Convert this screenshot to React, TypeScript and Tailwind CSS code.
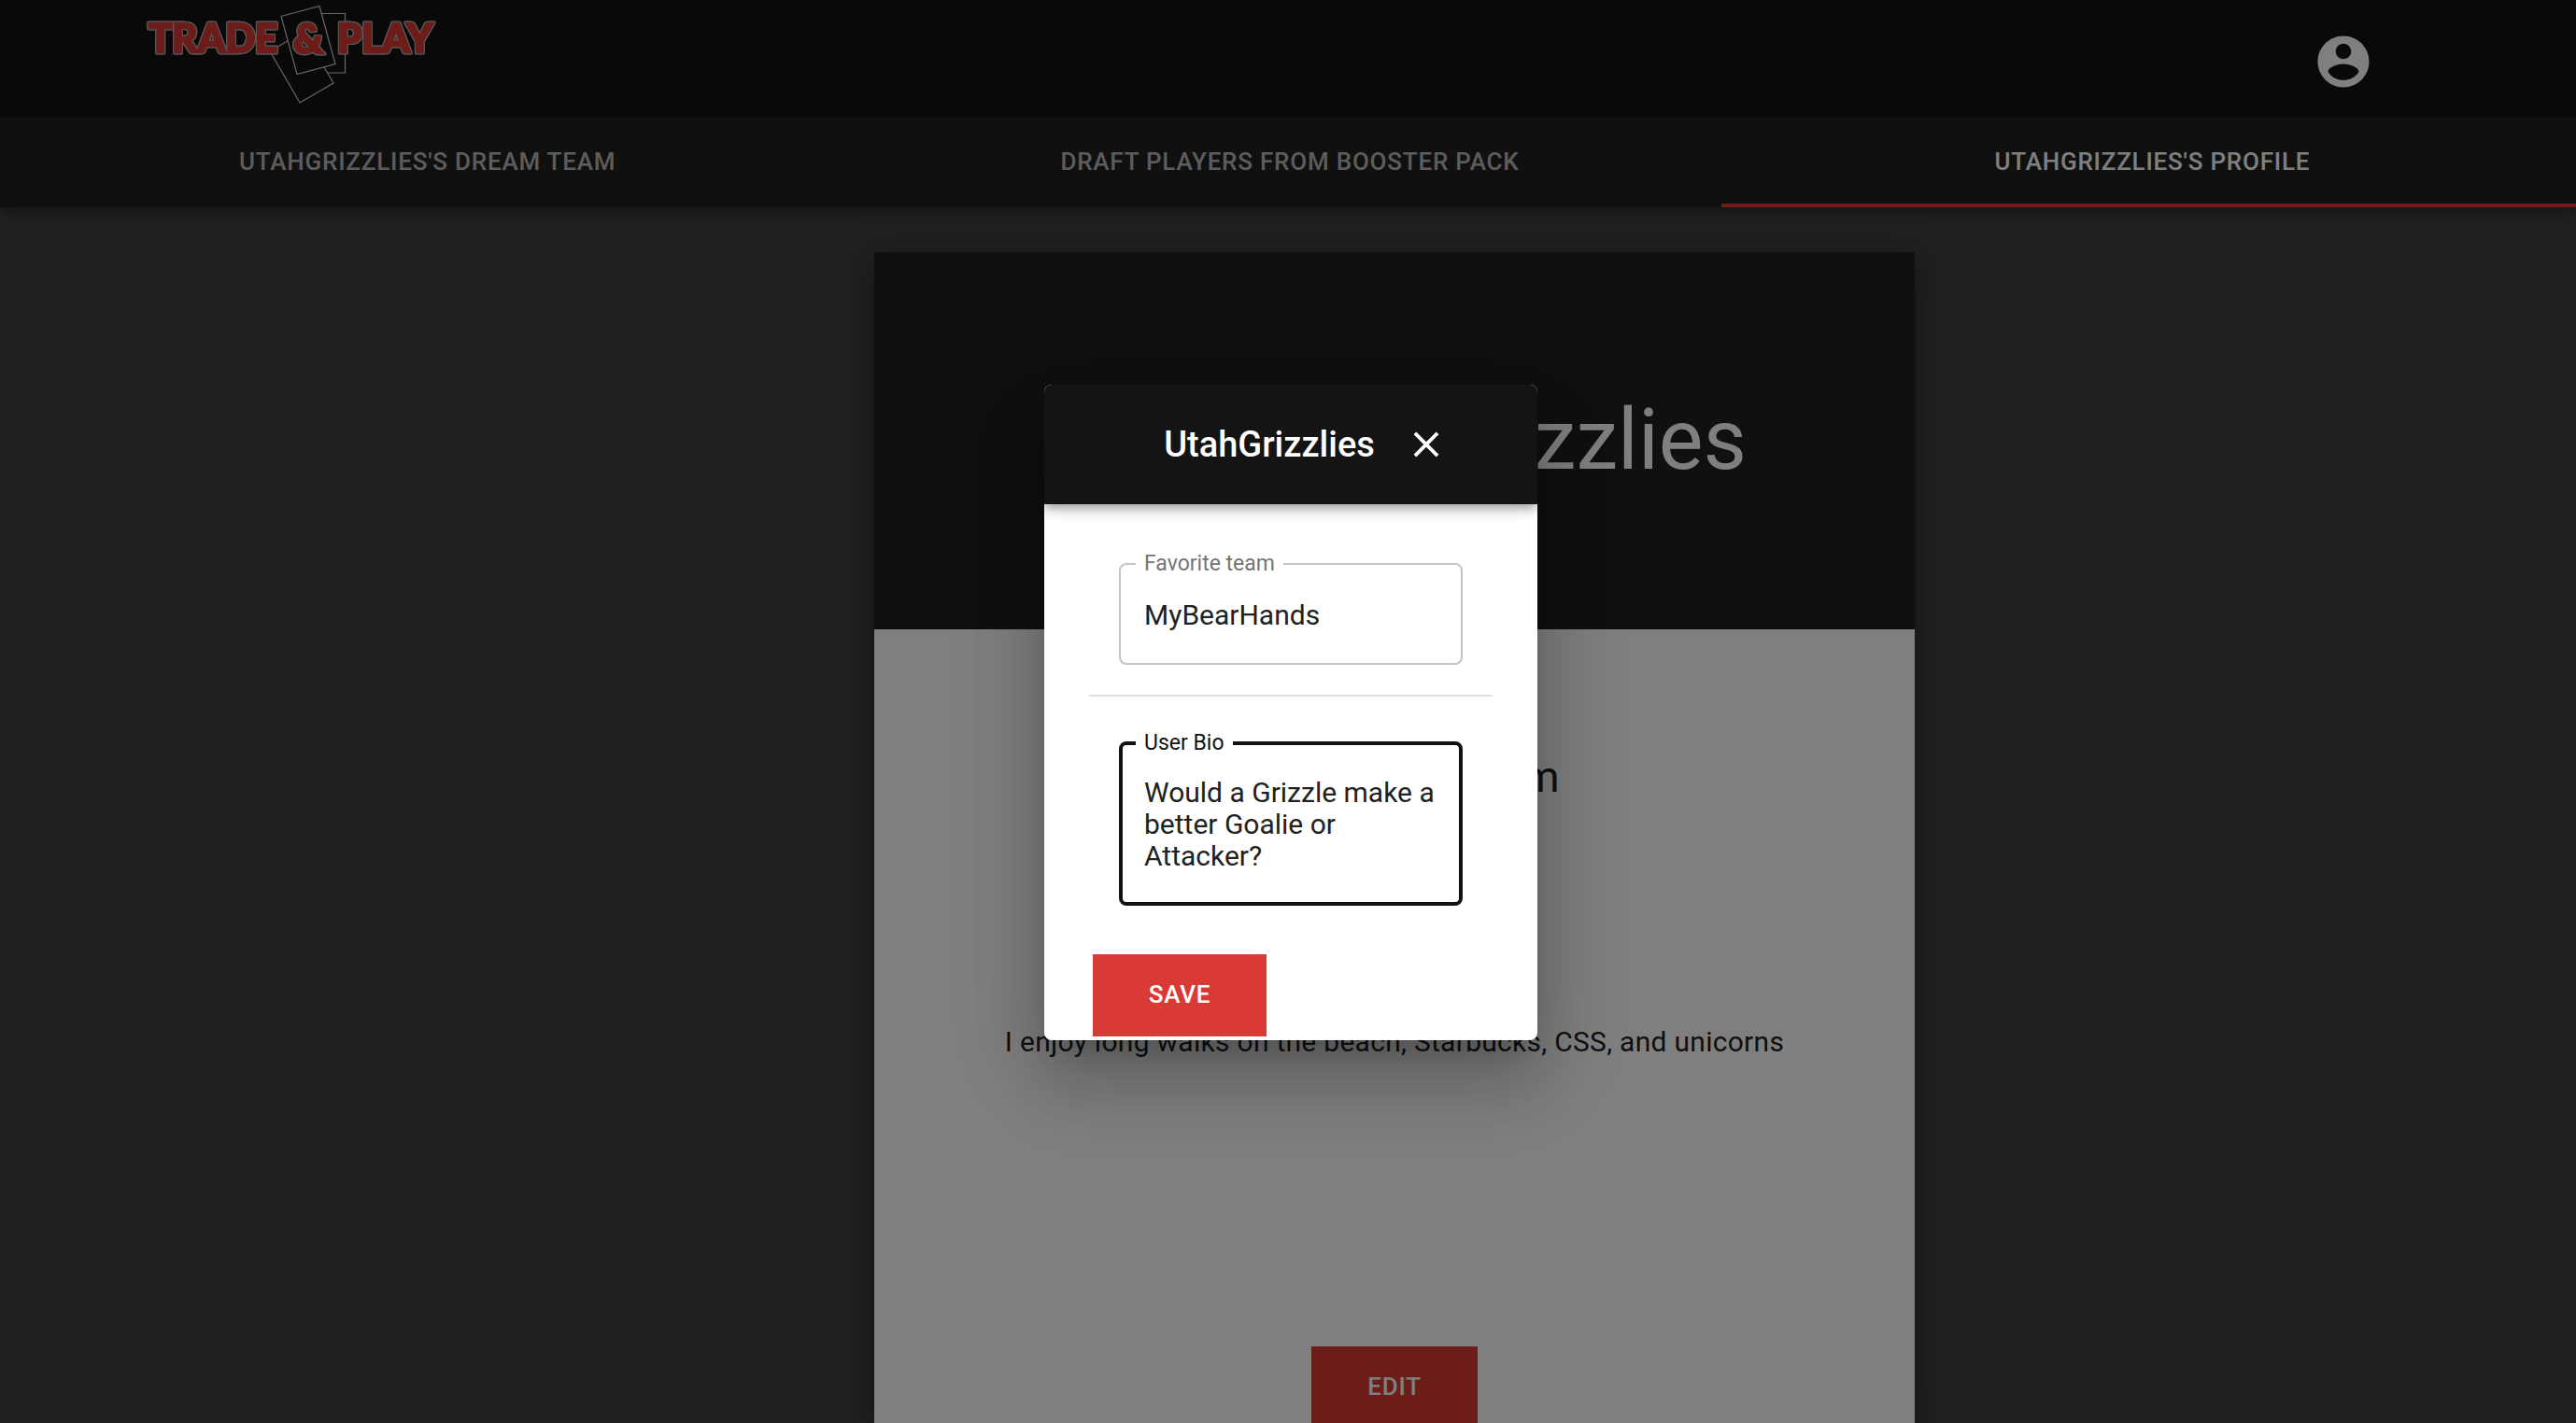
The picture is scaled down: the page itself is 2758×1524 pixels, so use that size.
import React from "react";

const tabs = [
  { label: "UtahGrizzlies's dream team", active: false },
  { label: "Draft players from booster pack", active: false },
  { label: "UtahGrizzlies's profile", active: true },
];

function Logo() {
  return (
    <svg
      width="320"
      height="112"
      viewBox="0 0 320 112"
      fill="none"
      role="img"
      aria-label="Trade & Play"
      className="block"
    >
      <g stroke="#d0d0d0" strokeWidth="1.2" fill="#121212">
        <path d="M180 14.500h38.500v63.500h-38.500z" />
        <path d="M138 55l36-21 32 55-36 21z" />
        <path d="M150 17.500l41-11 17 62-41 11z" />
      </g>
      <g
        fill="#d93a35"
        stroke="#d93a35"
        strokeWidth="2.5"
        strokeLinejoin="miter"
        fontFamily="Lato, sans-serif"
        fontWeight="900"
        fontSize="42"
        className="[filter:drop-shadow(1px_0_0_#b0b0b0)_drop-shadow(-1px_0_0_#b0b0b0)_drop-shadow(0_1px_0_#b0b0b0)_drop-shadow(0_-1px_0_#b0b0b0)]"
      >
        <text x="8" y="56">TRADE</text>
        <text x="163" y="57" fontSize="44">&amp;</text>
        <text x="210" y="56">PLAY</text>
      </g>
    </svg>
  );
}

function AccountIcon() {
  return (
    <svg width="66" height="66" viewBox="0 0 24 24" fill="#fff" aria-hidden="true">
      <path d="M12 2C6.480 2 2 6.480 2 12s4.480 10 10 10 10-4.480 10-10S17.520 2 12 2zm0 3c1.660 0 3 1.340 3 3s-1.340 3-3 3-3-1.340-3-3 1.340-3 3-3zm0 14.200c-2.500 0-4.710-1.280-6-3.220.030-1.990 4-3.080 6-3.080 1.990 0 5.970 1.090 6 3.080-1.290 1.940-3.500 3.220-6 3.220z" />
    </svg>
  );
}

function CloseIcon() {
  return (
    <svg width="46" height="46" viewBox="0 0 24 24" fill="currentColor" aria-hidden="true">
      <path d="M19 6.410L17.590 5 12 10.590 6.410 5 5 6.410 10.590 12 5 17.590 6.410 19 12 13.410 17.590 19 19 17.590 13.410 12z" />
    </svg>
  );
}

function Page() {
  return (
    <div className="flex min-h-screen flex-col bg-[#424242]">
      <header className="relative overflow-x-clip bg-[#202020] shadow-[0_4px_8px_-2px_rgba(0,0,0,0.2),0_8px_10px_rgba(0,0,0,0.14),0_2px_20px_rgba(0,0,0,0.12)]">
        <div className="flex h-[126px] items-start justify-between bg-[#121212] pr-[216px] pl-[151px]">
          <Logo />
          <button type="button" aria-label="Account" className="mt-[33px]">
            <AccountIcon />
          </button>
        </div>
        <nav className="-mr-2 -ml-1 grid grid-cols-3">
          {tabs.map((tab) => (
            <button
              key={tab.label}
              type="button"
              aria-current={tab.active ? "page" : undefined}
              className={
                tab.active
                  ? "h-24 border-b-4 border-[#d93a35] pt-0.5 text-[26px] font-medium tracking-[0.03em] text-white uppercase"
                  : "h-24 border-b-4 border-transparent pt-0.5 text-[26px] font-medium tracking-[0.03em] text-white/70 uppercase"
              }
            >
              {tab.label}
            </button>
          ))}
        </nav>
      </header>

      <main className="mt-12 mr-[708px] ml-[936px] flex flex-1 flex-col bg-white text-[#212121] shadow-[0_6px_6px_-4px_rgba(0,0,0,0.2),0_10px_28px_rgba(0,0,0,0.14),0_6px_40px_rgba(0,0,0,0.3)]">
        <div className="flex h-[404px] items-center justify-end bg-[#202020] pr-[180px]">
          <h1 className="text-[90px] leading-none text-white">UtahGrizzlies</h1>
        </div>
        <div className="flex flex-1 flex-col items-center pt-[126px]">
          <h2 className="text-[46px] leading-[64px]">My Favorite team</h2>
          <p className="mt-[228px] text-[30px] leading-[48px] tracking-[0.00938em]">
            I enjoy long walks on the beach, Starbucks, CSS, and unicorns
          </p>
          <button
            type="button"
            className="mt-[302px] h-[88px] w-[178px] bg-[#d93a35] pb-0.5 text-[26px] font-medium tracking-[0.03em] text-white uppercase"
          >
            Edit
          </button>
        </div>
      </main>
    </div>
  );
}

function ProfileDialog() {
  return (
    <div
      role="dialog"
      aria-modal="true"
      aria-labelledby="dialog-title"
      className="w-[528px] overflow-hidden rounded-lg bg-white text-[#212121] shadow-[0_22px_30px_-14px_rgba(0,0,0,0.2),0_48px_76px_6px_rgba(0,0,0,0.14),0_18px_92px_16px_rgba(0,0,0,0.12)]"
    >
      <div className="flex h-32 items-center justify-center gap-8 bg-[#141414] pl-8 text-white shadow-[0_4px_8px_-2px_rgba(0,0,0,0.2),0_8px_10px_rgba(0,0,0,0.14),0_2px_20px_rgba(0,0,0,0.12)]">
        <h2 id="dialog-title" className="text-[38px] font-medium">
          UtahGrizzlies
        </h2>
        <button type="button" aria-label="Close">
          <CloseIcon />
        </button>
      </div>
      <form className="flex flex-col px-12 pt-[54px] pb-1" onSubmit={(e) => e.preventDefault()}>
        <fieldset className="mx-8 h-[118px] rounded-lg border-2 border-[#c4c4c4] px-4">
          <legend className="h-5 px-[9px] text-[23px] leading-5 text-[#757575]">
            <label htmlFor="team">Favorite team</label>
          </legend>
          <input
            id="team"
            type="text"
            defaultValue="MyBearHands"
            className="mt-[26px] w-full px-[9px] text-[30px] leading-[38px] outline-none"
          />
        </fieldset>
        <hr className="mt-8 border-t-2 border-[#e0e0e0]" />
        <fieldset className="mx-8 mt-10 rounded-lg border-4 border-[#121212] px-[14px] pb-8">
          <legend className="h-5 px-[9px] text-[23px] leading-5 text-[#121212]">
            <label htmlFor="bio">User Bio</label>
          </legend>
          <textarea
            id="bio"
            rows={3}
            defaultValue="Would a Grizzle make a better Goalie or Attacker?"
            className="mt-[26px] block w-full resize-none overflow-hidden pl-[9px] text-[30px] leading-[34px] outline-none"
          />
        </fieldset>
        <button
          type="submit"
          className="mt-[52px] ml-1 h-[88px] w-[186px] bg-[#d93a35] pb-0.5 text-[26px] font-medium tracking-[0.03em] text-white uppercase"
        >
          Save
        </button>
      </form>
    </div>
  );
}

export default function App() {
  return (
    <div className="relative h-screen overflow-hidden font-[Roboto,sans-serif]">
      <Page />
      <div className="absolute inset-0 flex items-center justify-center bg-black/50 pt-0.5 pl-[6px]">
        <ProfileDialog />
      </div>
    </div>
  );
}
